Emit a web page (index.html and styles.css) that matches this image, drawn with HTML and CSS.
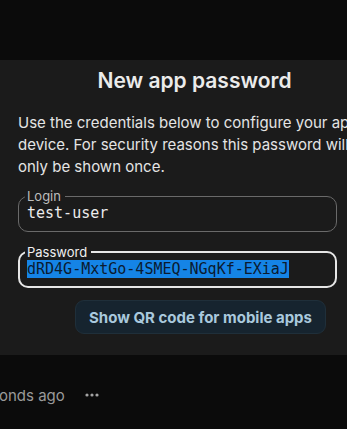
FILE: index.html
```html
<!DOCTYPE html>
<html>
<head>
<meta charset="utf-8">
<link rel="stylesheet" href="styles.css">
</head>
<body>
<div class="page">
  <div class="top"></div>
  <section class="dialog">
    <h2 class="title">New app password</h2>
    <p class="desc">Use the credentials below to configure your app or device. For security reasons this password will only be shown once.</p>
    <fieldset class="field">
      <legend>Login</legend>
      <div class="value">test-user</div>
    </fieldset>
    <fieldset class="field focused">
      <legend>Password</legend>
      <div class="value"><span class="sel">dRD4G-MxtGo-4SMEQ-NGqKf-EXiaJ</span></div>
    </fieldset>
    <div class="actions">
      <button class="qr">Show QR code for mobile apps</button>
    </div>
  </section>
  <div class="row">
    <span class="ago">onds ago</span>
    <svg class="dots" width="20" height="20" viewBox="0 0 20 20"><circle cx="5" cy="10" r="1.6"/><circle cx="10" cy="10" r="1.6"/><circle cx="15" cy="10" r="1.6"/></svg>
  </div>
</div>
</body>
</html>
```
FILE: styles.css
```css
html, body {
  margin: 0;
  padding: 0;
  background: #0b0b0b;
  overflow: hidden;
}
body {
  width: 347px;
  height: 429px;
  font-family: Inter, "Noto Sans", sans-serif;
}
.page {
  display: flex;
  flex-direction: column;
}
.top {
  height: 60px;
}
.dialog {
  background: #1b1b1b;
  width: 389px;
  box-sizing: border-box;
  padding: 7px 0 20px 18px;
  height: 295px;
}
.title {
  margin: 0;
  padding-right: 18px;
  text-align: center;
  font-size: 21px;
  font-weight: 600;
  line-height: 28px;
  color: #ebebeb;
}
.desc {
  margin: 17px 0 0;
  width: 360px;
  font-size: 15px;
  line-height: 22px;
  color: #e4e4e4;
}
.field {
  margin: 11px 0 0;
  width: 319px;
  box-sizing: border-box;
  height: 43px;
  padding: 0 8px;
  border: 1px solid #6a6a6a;
  border-radius: 10px;
}
.field legend {
  padding: 0 4px 0 2px;
  margin-left: -2px;
  font-size: 13px;
  line-height: 14px;
  color: #bdbdbd;
}
.field.focused {
  margin-top: 13px;
  border: 2px solid #e6e6e6;
  padding: 0 7px;
}
.field.focused legend {
  color: #f0f0f0;
}
.value {
  font-family: "DejaVu Sans Mono", monospace;
  font-size: 15px;
  line-height: 18px;
  color: #ececec;
  margin-top: 1px;
}
.sel {
  background: #1584e6;
  color: #0b1b30;
}
.actions {
  display: flex;
  padding-left: 57px;
  margin-top: 12px;
}
.qr {
  font-family: Inter, "Noto Sans", sans-serif;
  font-size: 15px;
  font-weight: 700;
  color: #a9c9dd;
  background: #16242f;
  border: 1px solid #1f2f3a;
  border-radius: 9px;
  height: 34px;
  width: 251px;
  padding: 0;
}
.row {
  display: flex;
  align-items: center;
  height: 80px;
}
.ago {
  font-size: 15px;
  color: #9a9a9a;
  margin-left: -1px;
}
.dots {
  fill: #a3a3a3;
  margin-left: 17px;
}
```
